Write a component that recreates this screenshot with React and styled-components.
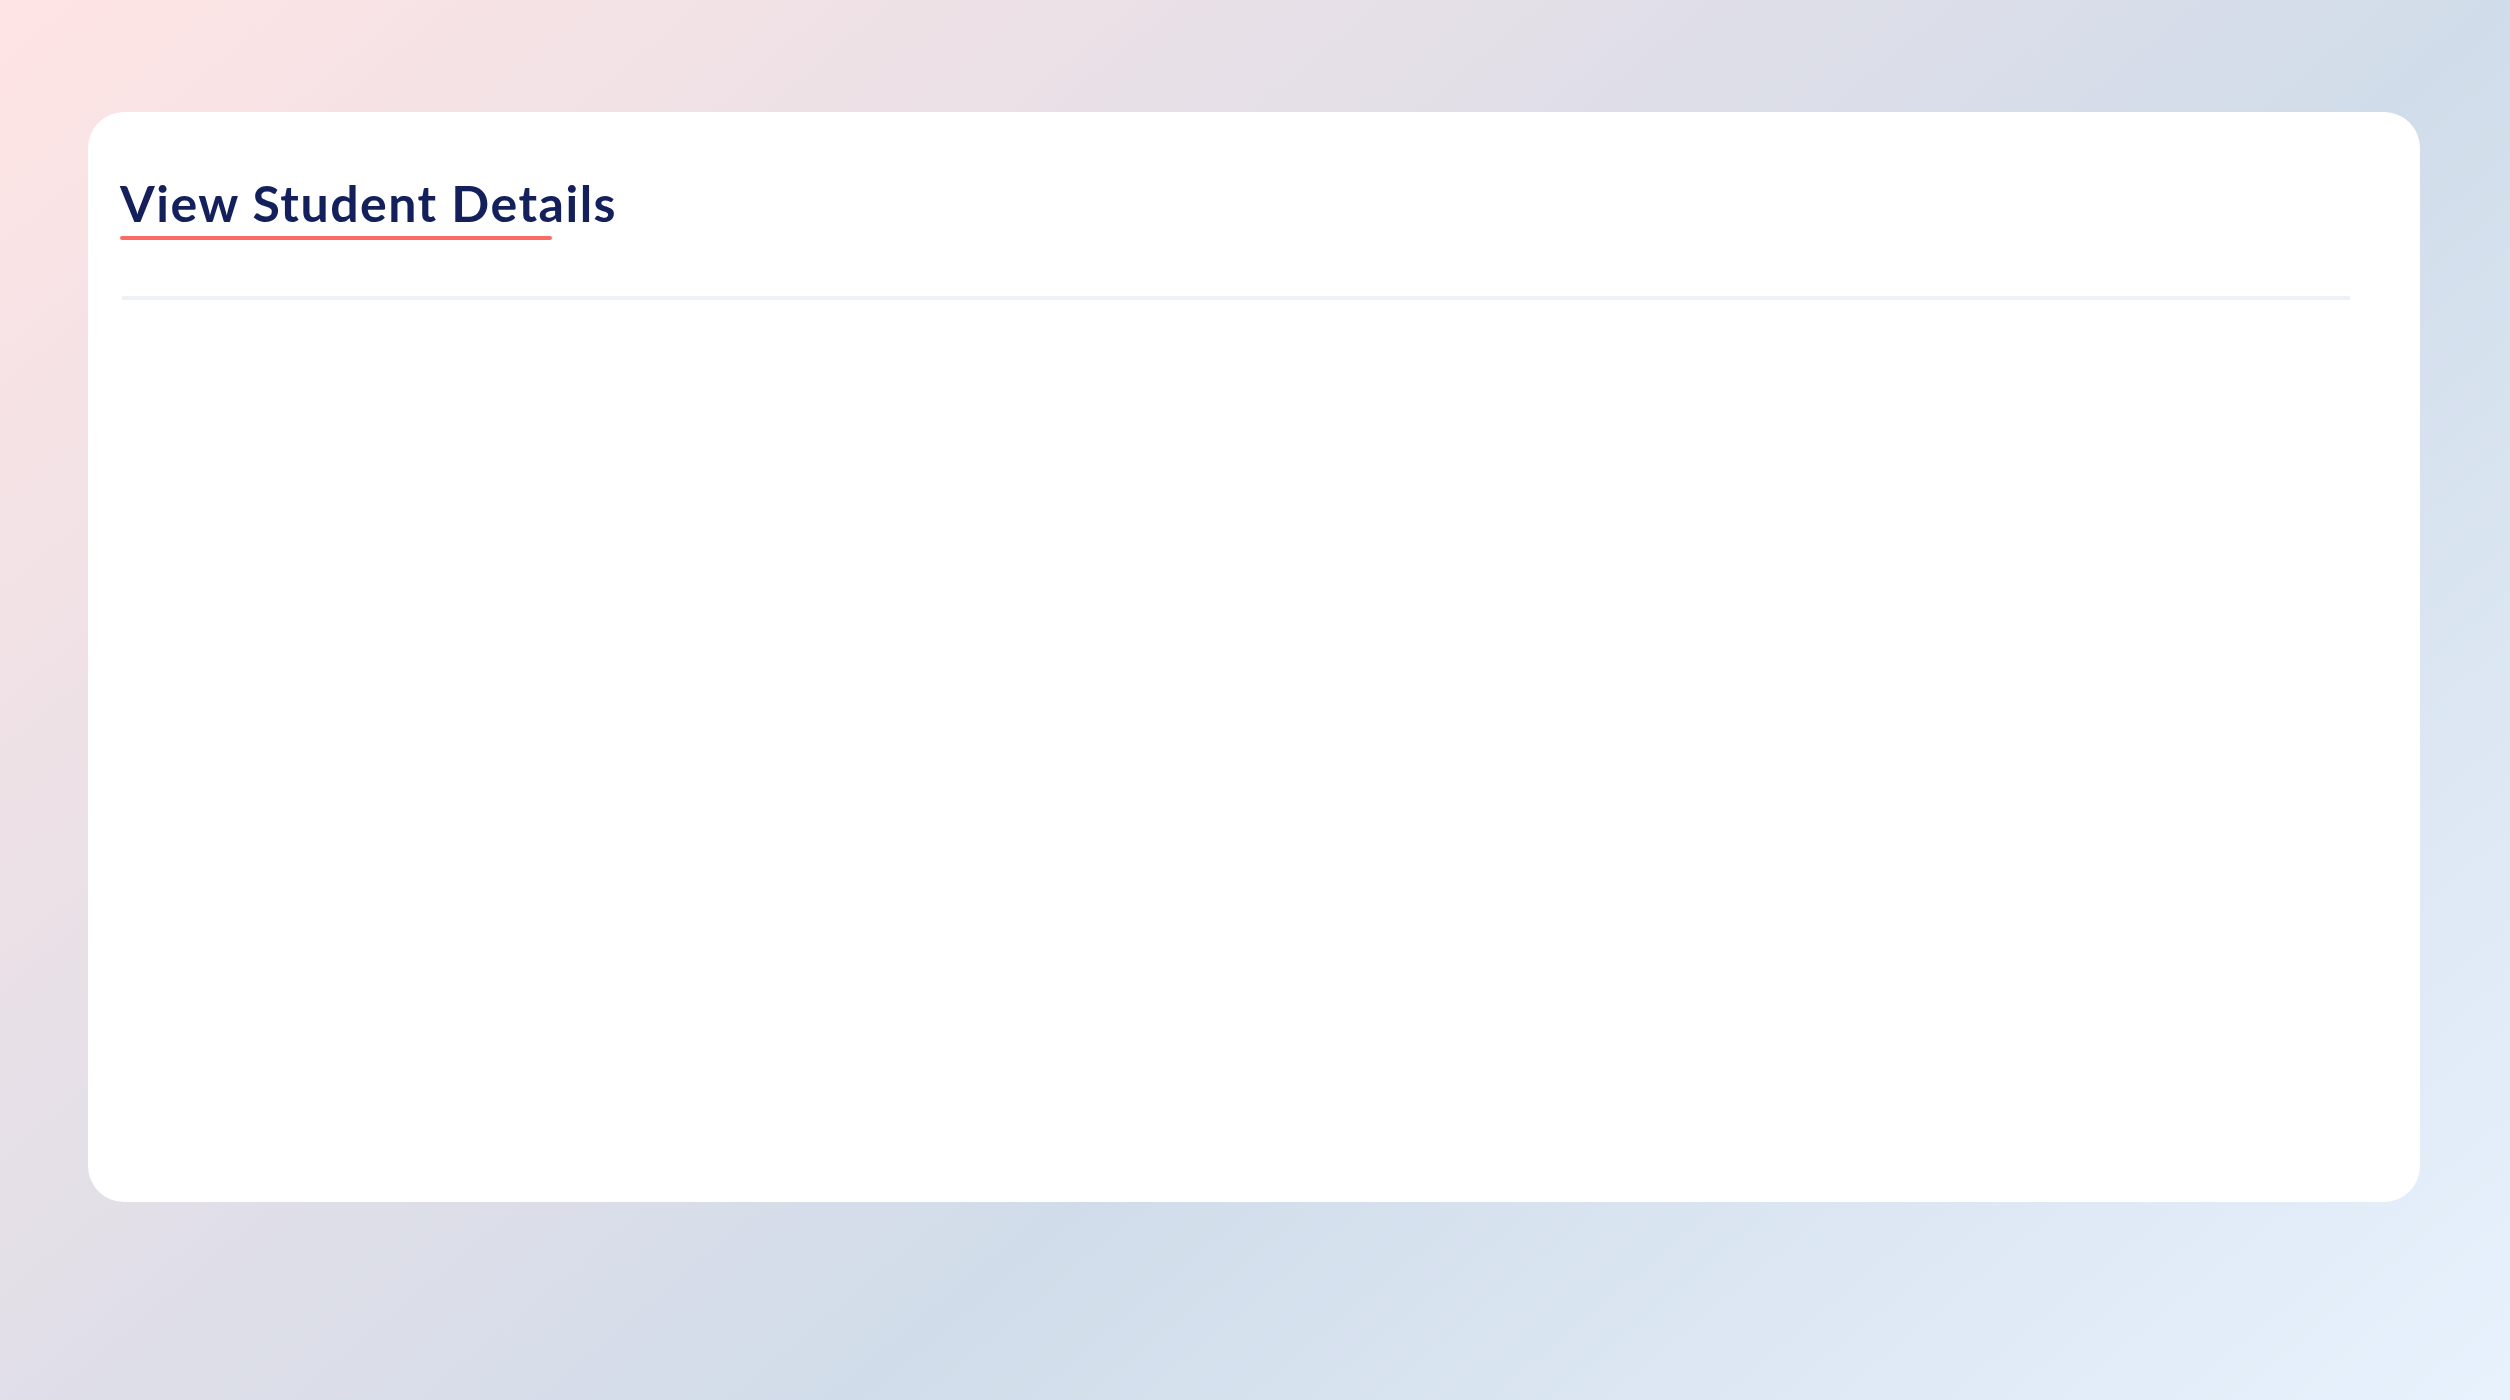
import styled, { createGlobalStyle } from "styled-components";

const GlobalStyle = createGlobalStyle`
  * {
    box-sizing: border-box;
  }

  body {
    margin: 0;
    font-family: Lato, "Noto Sans", sans-serif;
  }
`;

const Page = styled.div`
  min-height: 100vh;
  padding: 112px 90px 198px 88px;
  background: linear-gradient(
    140deg,
    #ffe4e4 0%,
    #d1dcea 60%,
    #e8f2fd 100%
  );
`;

const Card = styled.section`
  height: 1090px;
  padding: 61px 70px 0 32px;
  background: #ffffff;
  border-radius: 36px;
`;

const Title = styled.h2`
  position: relative;
  display: inline-block;
  margin: 0;
  padding-bottom: 7px;
  font-size: 50px;
  font-weight: 700;
  line-height: 1.2;
  letter-spacing: 1.5px;
  color: #13205c;

  &::after {
    content: "";
    position: absolute;
    left: 0;
    bottom: 0;
    width: 432px;
    height: 4px;
    border-radius: 2px;
    background: #fc6a64;
  }
`;

const Divider = styled.hr`
  margin: 56px 0 0 2px;
  height: 4px;
  border: none;
  background: #eef1f7;
`;

export default function App() {
  return (
    <>
      <GlobalStyle />
      <Page>
        <Card>
          <Title>View Student Details</Title>
          <Divider />
        </Card>
      </Page>
    </>
  );
}
